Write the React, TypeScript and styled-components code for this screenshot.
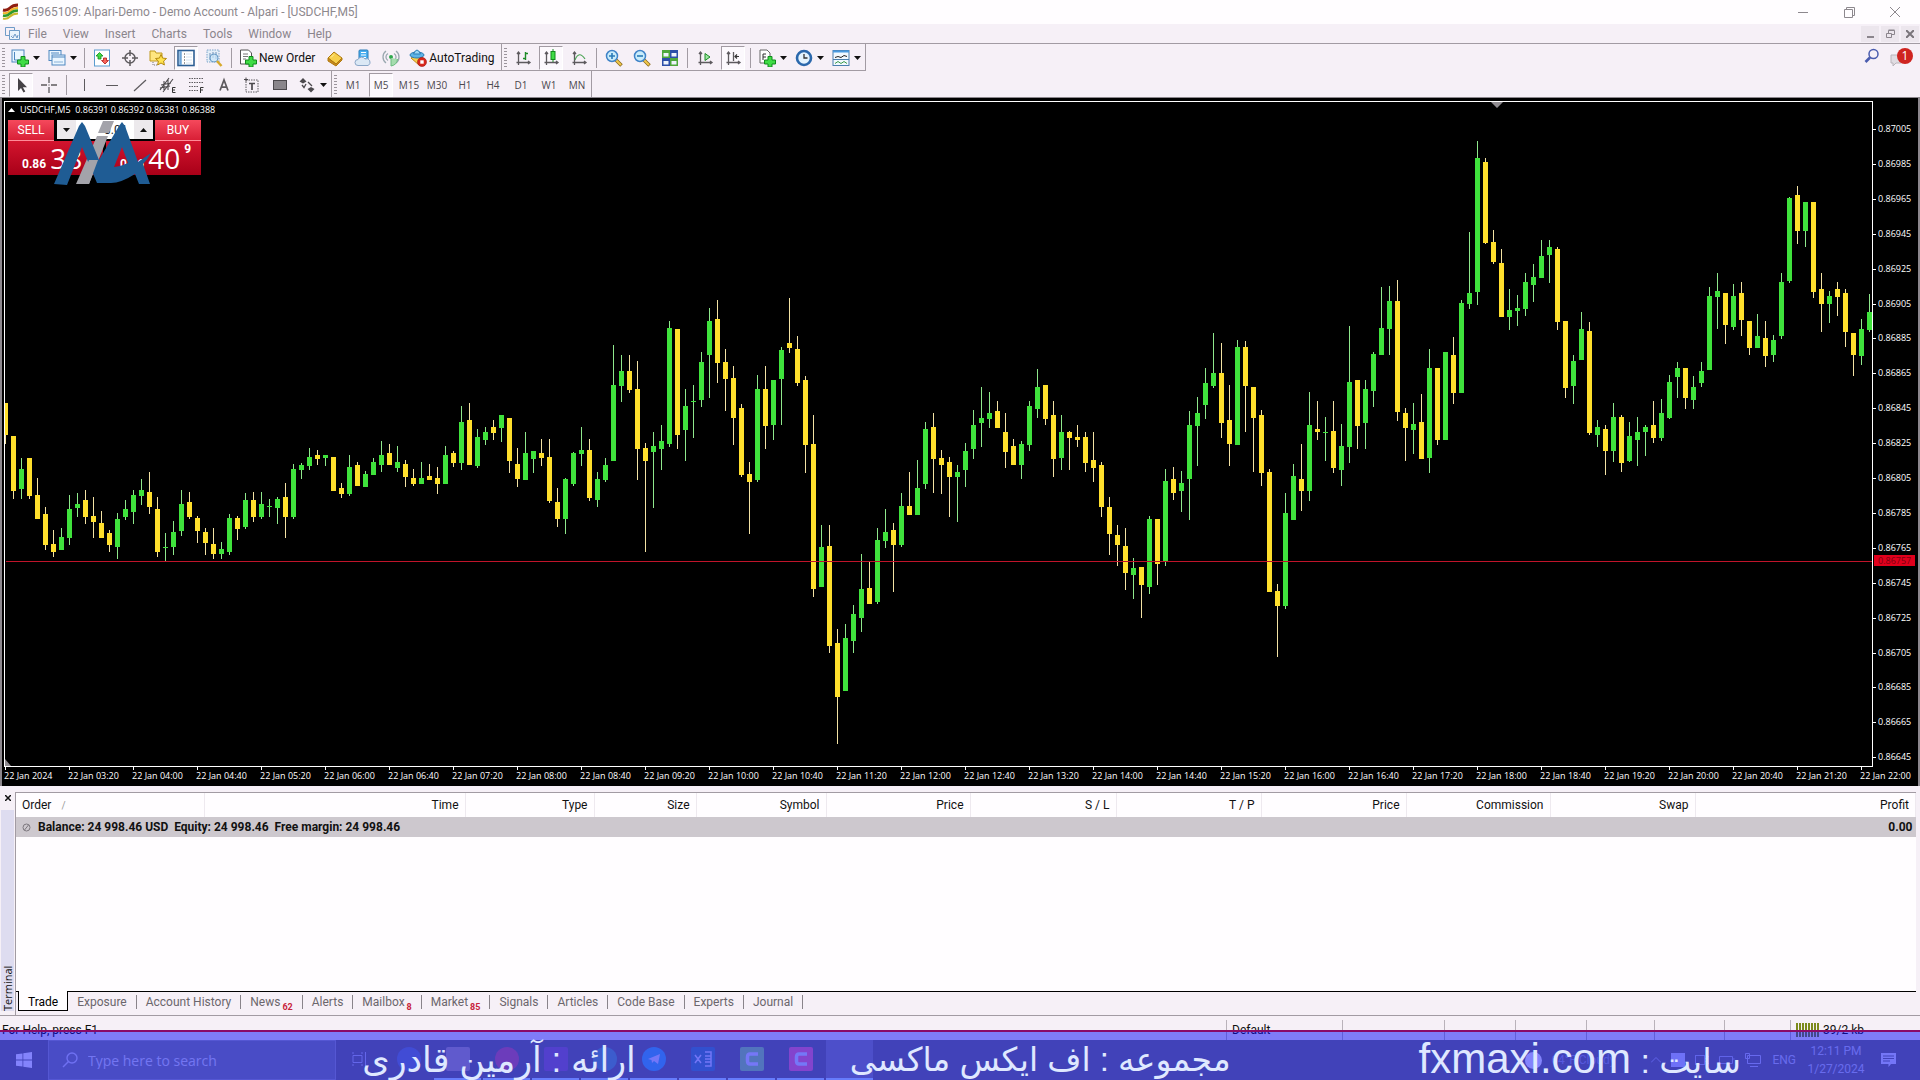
import React from 'react';
import styled, { createGlobalStyle, css } from 'styled-components';

const GlobalStyle = createGlobalStyle`
  *, *::before, *::after { box-sizing: border-box; }
  body { margin: 0; background: #f6f0f7; }
  button, input { font: inherit; color: inherit; }
`;

const uiFont = 'Roboto, "Open Sans", sans-serif';
const chartFont = '"Open Sans", "Noto Sans", sans-serif';
const chrome = '#f6f0f7';
const edge = '#a29ba3';

const Screen = styled.div`
  position: relative;
  display: flex;
  flex-direction: column;
  min-height: 100vh;
  overflow: hidden;
  background: ${chrome};
  font-family: ${uiFont};
  font-size: 12px;
  line-height: 16px;
  color: #111;
`;

/* ---------- window chrome ---------- */

const TitleBar = styled.header`
  display: flex;
  align-items: center;
  height: 24px;
  padding: 0 2px;
  gap: 5px;
  background: #fffdff;
  color: #8d888e;
`;

const TitleText = styled.h1`
  flex: 1;
  margin: 0;
  font-size: 12px;
  font-weight: 400;
`;

const WindowButtons = styled.div`
  display: flex;
`;

const WindowButton = styled.button<{ $shade?: boolean }>`
  display: flex;
  align-items: center;
  justify-content: center;
  width: ${(p) => (p.$shade ? 18 : 46)}px;
  height: ${(p) => (p.$shade ? 16 : 22)}px;
  padding: 0;
  border: 0;
  background: ${(p) => (p.$shade ? '#ece6ed' : 'transparent')};
`;

const MenuBar = styled.nav`
  display: flex;
  align-items: center;
  height: 19px;
  padding-left: 5px;
  color: #8b858c;
`;

const MenuItem = styled.button`
  padding: 0 8px;
  border: 0;
  background: none;
  line-height: 18px;
`;

const Spacer = styled.span`
  flex: 1;
`;

const MdiButtons = styled.div`
  display: flex;
  gap: 2px;
  padding-right: 1px;
`;

/* ---------- toolbars ---------- */

const ToolRow = styled.div<{ $last?: boolean }>`
  display: flex;
  height: ${(p) => (p.$last ? 26 : 28)}px;
  ${(p) => !p.$last && css`border-top: 1px solid ${edge};`}
`;

const ToolGroup = styled.div<{ $line?: boolean }>`
  display: flex;
  align-items: center;
  padding-top: 1px;
  border-right: 1px solid ${edge};
  ${(p) => p.$line && css`border-bottom: 1px solid ${edge};`}
`;

const Grip = styled.i`
  width: 3px;
  height: 20px;
  margin: 0 2px;
  background: repeating-linear-gradient(#9b949c 0 1px, transparent 1px 3px);
`;

const Divider = styled.i`
  width: 1px;
  height: 20px;
  margin: 0 3px;
  background: ${edge};
`;

const ToolButton = styled.button<{ $on?: boolean; $wide?: boolean }>`
  display: flex;
  align-items: center;
  justify-content: center;
  gap: 2px;
  width: ${(p) => (p.$wide ? 'auto' : '28px')};
  height: 24px;
  padding: ${(p) => (p.$wide ? '0 5px 0 3px' : 0)};
  border: 1px solid transparent;
  background: none;
  white-space: nowrap;
  ${(p) => p.$on && css`
    width: 24px;
    margin: 0 2px;
    border-color: ${edge} #fff #fff ${edge};
    background: #fcf9fd;
  `}
`;

const MenuToolButton = styled(ToolButton)`
  justify-content: flex-start;
  gap: 4px;
  width: 37px;
  padding-left: 3px;
`;

const PeriodButton = styled(ToolButton)`
  font-family: ${chartFont};
  font-size: 10px;
  color: #4c484d;
`;

const RightTools = styled.div`
  display: flex;
  align-items: flex-start;
  padding: 3px 6px 0 0;
  gap: 10px;
`;

const PlainButton = styled.button`
  padding: 0;
  border: 0;
  background: none;
  line-height: 0;
`;

/* ---------- chart ---------- */

const ChartFrame = styled.main`
  position: relative;
  border: solid #8c878d;
  border-width: 1px 2px 0 2px;
  background: #000;
`;

const ChartSvg = styled.svg`
  display: block;
  width: 100%;
  height: auto;
  font-family: ${chartFont};
`;

const ChartCaption = styled.div`
  position: absolute;
  top: 4px;
  left: 6px;
  display: flex;
  align-items: center;
  gap: 5px;
  color: #fff;
  font-family: ${chartFont};
  font-size: 9px;
  white-space: pre;
`;

const TradePanel = styled.section`
  position: absolute;
  top: 22px;
  left: 6px;
  display: grid;
  grid-template-columns: 1fr 1fr;
  grid-template-rows: 21px 34px;
  column-gap: 3px;
  width: 193px;
  color: #fff;
`;

const TradeTop = styled.div`
  grid-column: 1 / 3;
  display: flex;
  justify-content: space-between;
`;

const SideButton = styled.button`
  width: 46px;
  padding: 0;
  border: 0;
  border-bottom: 1px solid #ff8b98;
  background: linear-gradient(#f5495c, #d81f36);
  line-height: 20px;
`;

const LotBox = styled.div`
  display: flex;
  width: 96px;
  height: 19px;
  background: #fff;
  color: #222;
`;

const LotInput = styled.input`
  width: 58px;
  padding: 0 6px;
  border: 0;
  background: #fff;
  text-align: right;
`;

const LotStep = styled.button`
  width: 19px;
  padding: 0;
  border: 0;
  background: #ece9ec;
  line-height: 0;
`;

const Quote = styled.button`
  display: flex;
  align-items: flex-end;
  gap: 4px;
  padding: 0 0 3px 14px;
  border: 0;
  background: linear-gradient(#d3142e, #a80018);
  font-weight: 700;
  line-height: 16px;
  text-align: left;
`;

const BigFigure = styled.span`
  font-family: ${chartFont};
  font-size: 28px;
  font-weight: 400;
  line-height: 28px;
`;

const Pip = styled.sup`
  align-self: flex-start;
  font-size: 12px;
  line-height: 16px;
`;

const Watermark = styled.svg`
  position: absolute;
  top: 22px;
  left: 52px;
`;

/* ---------- terminal ---------- */

const Terminal = styled.section`
  display: flex;
  flex: 1;
  margin-top: 6px;
  min-height: 224px;
  border-bottom: 1px solid ${edge};
`;

const TerminalRail = styled.div`
  display: flex;
  flex-direction: column;
  align-items: center;
  justify-content: space-between;
  width: 15px;
  padding-bottom: 4px;
`;

const RailClose = styled.button`
  width: 13px;
  height: 12px;
  padding: 0;
  border: 0;
  background: none;
  line-height: 0;
`;

const RailLabel = styled.span`
  flex: 1;
  width: 13px;
  margin-top: 6px;
  background: #dedcf0;
  font-family: ${chartFont};
  font-size: 11px;
  line-height: 13px;
  writing-mode: vertical-rl;
  transform: rotate(180deg);
`;

const TerminalBody = styled.div`
  display: flex;
  flex: 1;
  flex-direction: column;
  margin-right: 4px;
  border: solid ${edge};
  border-width: 1px 0 0 1px;
  background: #fffdff;
`;

const TradeTable = styled.table`
  width: 100%;
  border-collapse: collapse;
  table-layout: fixed;
`;

const HeadCell = styled.th<{ $left?: boolean }>`
  height: 24px;
  padding: 0 6px;
  border-right: 1px solid #eee9ef;
  font-weight: 400;
  text-align: ${(p) => (p.$left ? 'left' : 'right')};
`;

const BalanceCell = styled.td<{ $right?: boolean }>`
  height: 20px;
  padding: 0 3px 0 6px;
  background: #cdc8ce;
  font-weight: 700;
  text-align: ${(p) => (p.$right ? 'right' : 'left')};
  white-space: pre;

  svg { margin-right: 7px; vertical-align: -2px; }
`;

const SortMark = styled.span`
  margin-left: 10px;
  color: #999;
  font-size: 10px;
`;

const TabBar = styled.div`
  display: flex;
  align-items: flex-start;
  height: 24px;
  margin-top: auto;
  padding-left: 2px;
  border-top: 1px solid #000;
  background: ${chrome};
`;

const Tab = styled.button<{ $active?: boolean }>`
  height: 14px;
  margin-top: 3px;
  padding: 0 9px;
  border: 0;
  border-right: 1px solid #89838a;
  background: none;
  color: #6b666c;
  line-height: 14px;
  white-space: nowrap;
  ${(p) => p.$active && css`
    height: 20px;
    margin-top: -1px;
    padding-top: 2px;
    border: solid #000;
    border-width: 0 1px 1px;
    background: #fffdff;
    color: #000;
  `}
`;

const TabCount = styled.sub`
  margin-left: 2px;
  color: #c8233c;
  font-size: 9px;
  line-height: 9px;
  font-weight: 700;
  vertical-align: -4px;
`;

const StatusBar = styled.footer`
  display: flex;
  height: 24px;
  padding-top: 4px;
  padding-left: 2px;
`;

const StatusHelp = styled.span`
  flex: 1;
  line-height: 20px;
`;

const StatusCell = styled.span<{ $w: number }>`
  display: flex;
  align-items: center;
  gap: 3px;
  width: ${(p) => p.$w}px;
  padding-left: 5px;
  border-left: 1px solid #b9b2ba;
  line-height: 20px;
`;

/* ---------- desktop task bar ---------- */

const TaskBar = styled.footer`
  display: flex;
  align-items: stretch;
  height: 40px;
  background: #7a7d78;
  color: #c8cee2;
`;

const StartButton = styled.button`
  width: 48px;
  padding: 0;
  border: 0;
  background: none;
  line-height: 0;
`;

const SearchField = styled.label`
  display: flex;
  align-items: center;
  gap: 9px;
  width: 288px;
  padding-left: 12px;
  border: 1px solid #a3a6ac;
  background: #8b9092;
`;

const SearchInput = styled.input`
  flex: 1;
  min-width: 0;
  padding: 2px 0 0;
  border: 0;
  background: none;
  font-family: ${chartFont};
  font-size: 14px;
  &::placeholder { color: #dfe3ea; opacity: 1; }
`;

const TaskButton = styled.button<{ $running?: boolean; $active?: boolean }>`
  display: flex;
  align-items: center;
  justify-content: center;
  width: 47px;
  margin-right: 2px;
  padding: 0;
  border: 0;
  border-bottom: 2px solid ${(p) => (p.$running ? '#c4f0ff' : 'transparent')};
  background: ${(p) => (p.$active ? '#92969a' : 'none')};
`;

const AppTile = styled.span<{ $bg: string; $round?: boolean }>`
  display: flex;
  align-items: center;
  justify-content: center;
  width: 24px;
  height: 24px;
  border-radius: ${(p) => (p.$round ? 12 : 2)}px;
  background: ${(p) => p.$bg};
  color: #d5d9ea;
`;

const Tray = styled.div`
  display: flex;
  align-items: center;
  gap: 10px;
  margin-left: auto;
  padding-right: 23px;
`;

const Weather = styled.span`
  display: flex;
  align-items: center;
  gap: 9px;
  margin-right: 26px;
  color: #a6abc4;
`;

const WeatherDot = styled.i`
  width: 17px;
  height: 17px;
  border-radius: 50%;
  background: #fff;
`;

const Clock = styled.time`
  width: 60px;
  margin-right: 4px;
  line-height: 18px;
  text-align: center;
`;

/* ---------- broadcast banner ---------- */

const Banner = styled.aside`
  position: absolute;
  right: 0;
  bottom: 0;
  left: 0;
  display: flex;
  justify-content: flex-end;
  align-items: center;
  height: 50px;
  padding: 8px 179px 0 0;
  border-top: 2px solid #8a0a68;
  background: rgba(8, 8, 250, 0.5);
  color: #dfe8ff;
  font-family: "Liberation Sans", "DejaVu Sans", sans-serif;
  line-height: 40px;
  white-space: nowrap;
  pointer-events: none;
`;

const BannerText = styled.span<{ $size: number; $gap: number }>`
  margin-right: ${(p) => p.$gap}px;
  font-size: ${(p) => p.$size}px;
`;

const Latin = styled.bdi`
  font-size: 42px;
`;

/* ---------- data ---------- */

// One bar per entry: colour, high, body top, body bottom, low.
const BARS = `
Y403,403,435,444 Y436,436,491,499 G458,469,489,499 Y458,458,496,499 Y478,495,519,519 Y507,514,545,550
Y530,544,552,557 G528,537,550,550 G495,509,538,545 G493,504,508,517 Y490,500,517,524 Y497,516,522,538
Y511,523,538,538 Y530,533,545,552 G513,519,547,559 G500,509,517,520 G490,495,512,524 G479,490,496,505
Y472,492,507,514 Y497,509,552,557 G533,547,548,561 G521,532,547,555 G490,504,531,536 Y492,502,517,519
Y516,518,531,543 Y528,532,543,555 Y528,544,554,559 G542,549,554,559 G514,518,552,555 Y516,518,529,540
G493,500,527,529 Y492,500,517,522 G492,504,517,519 G499,506,507,517 G497,499,508,524 Y483,497,517,538
G464,469,517,519 G463,465,470,479 G448,457,466,470 Y450,455,459,465 G455,455,458,466 Y457,457,491,491
Y483,488,494,498 G455,467,494,496 Y462,465,486,486 G471,474,487,487 G458,462,475,475 G441,455,465,472
Y444,453,465,465 G446,462,468,472 Y460,464,477,487 Y469,478,484,486 G462,478,484,484 Y464,476,480,480
Y467,478,484,494 G446,455,484,484 Y451,453,463,467 G406,422,463,470 Y403,420,465,465 G429,437,466,468
G427,432,440,445 Y420,427,433,440 G415,415,428,442 Y418,418,461,473 Y448,464,479,487 G432,453,480,480
G451,451,459,473 Y439,453,458,466 Y439,457,501,503 Y488,502,519,527 G478,479,519,534 G452,453,484,486
G427,450,454,466 Y439,450,498,501 G472,479,500,507 G458,465,480,482 G345,385,461,461 G355,371,386,402
Y355,371,390,393 Y361,389,449,480 Y443,448,461,552 G432,446,452,508 G425,441,449,470 G321,328,444,447
Y329,329,435,449 G389,406,430,461 G385,401,402,438 G352,362,400,407 G308,321,355,398 Y300,319,363,383
Y349,362,379,411 Y366,378,418,445 Y404,408,475,477 Y462,474,482,534 G375,389,480,482 Y366,389,426,449
G380,380,425,440 G347,350,379,425 Y298,343,348,353 Y336,349,383,386 Y376,380,445,473 Y415,444,589,597
G525,547,587,587 Y525,546,646,653 Y629,643,697,744 G624,638,691,691 G605,614,641,653 G554,589,618,632
Y562,588,604,604 G528,540,602,604 G509,532,541,548 Y523,530,545,592 G493,506,545,547 Y472,506,515,515
G460,488,515,515 G422,429,484,489 Y413,427,459,493 Y450,458,465,494 Y457,462,477,517 G465,472,477,522
G443,451,470,487 G410,425,449,459 G387,418,423,447 G392,413,419,428 Y401,411,428,428 Y413,432,452,468
Y439,446,465,465 G441,444,465,479 G401,406,445,451 G369,387,409,418 Y385,385,419,425 Y401,415,459,477
G415,432,458,470 Y431,432,438,470 Y425,437,440,447 Y432,437,463,472 Y432,460,468,482 Y462,465,507,517
Y497,507,534,555 Y525,535,545,566 Y528,546,573,590 G558,568,575,599 Y567,567,585,618 G516,519,587,594
Y519,519,564,585 G469,481,561,566 Y467,479,493,500 G471,483,491,512 G411,425,479,520 G397,413,426,466
G368,383,405,419 G333,373,386,388 Y343,373,423,438 Y385,420,444,466 G340,347,445,445 Y341,347,386,432
Y387,387,418,472 Y410,415,473,486 Y469,472,592,592 Y584,591,606,657 G493,513,606,609 G464,476,520,520
Y444,479,491,511 G392,425,491,501 Y401,429,432,440 G417,432,433,461 Y401,431,468,473 G424,446,470,486
G326,382,447,463 Y380,380,426,449 G380,389,423,449 G352,354,391,407 G287,328,355,355 G286,301,329,355
Y280,301,412,421 Y408,413,428,461 G403,424,430,454 Y394,422,459,459 G349,368,458,473 Y368,368,440,445
G352,352,440,440 Y337,355,393,404 G300,303,393,393 G232,293,304,309 G141,158,292,305 Y158,162,243,244
Y230,242,262,264 Y249,263,317,317 G289,310,317,330 G295,308,311,326 G273,282,309,316 G264,277,285,302
G240,256,278,278 G240,247,255,283 Y247,249,322,330 Y321,321,388,398 G355,361,386,404 G312,329,360,360
Y322,331,433,435 G420,427,435,447 Y425,429,451,475 G403,417,451,462 Y415,417,463,472 G422,436,461,462
G417,432,440,466 G425,427,432,456 Y401,425,438,443 G399,413,438,441 G375,382,418,419 G362,368,377,398
Y368,368,398,409 G376,387,400,409 G362,371,383,387 G287,296,370,370 G273,291,297,329 Y293,293,325,344
G284,296,327,330 Y282,293,320,336 Y321,321,348,355 G314,336,348,348 Y321,338,356,367 G335,340,355,362
G273,282,336,339 G197,198,281,283 Y186,195,231,244 G202,202,231,247 Y202,202,292,298 Y273,289,304,332
G291,296,304,323 Y282,289,297,316 Y289,293,332,347 Y333,333,355,376 G319,329,356,365 G294,312,330,332
`.trim().split(/\s+/).map((b) => {
  const [high, top, bottom, low] = b.slice(1).split(',').map(Number);
  return { up: b[0] === 'G', high, top, bottom, low };
});

const PRICES = Array.from({ length: 19 }, (_, i) => ({
  label: ((87005 - i * 20) / 100000).toFixed(5),
  y: Math.round(129 + i * 34.9),
}));

const TIMES = Array.from({ length: 30 }, (_, i) => {
  const t = 160 + i * 40;
  const hh = String(Math.floor(t / 60)).padStart(2, '0');
  const mm = String(t % 60).padStart(2, '0');
  return { label: i === 0 ? '22 Jan 2024' : `22 Jan ${hh}:${mm}`, x: 5 + i * 64 };
});

const COLUMNS: [string, number | undefined][] = [
  ['Order', 188], ['Time', 261], ['Type', 129], ['Size', 102], ['Symbol', 130], ['Price', 144],
  ['S / L', 146], ['T / P', 145], ['Price', 145], ['Commission', 144], ['Swap', 145], ['Profit', undefined],
];

const TABS: [string, string?][] = [
  ['Trade'], ['Exposure'], ['Account History'], ['News', '62'], ['Alerts'], ['Mailbox', '8'], ['Market', '85'],
  ['Signals'], ['Articles'], ['Code Base'], ['Experts'], ['Journal'],
];

/* ---------- icons ---------- */

const Icon = ({ children, s = 18 }: { children: React.ReactNode; s?: number }) => (
  <svg width={s} height={s} viewBox="0 0 18 18" fill="none" aria-hidden="true">{children}</svg>
);
const Caret = () => (
  <svg width="7" height="4" viewBox="0 0 7 4" aria-hidden="true"><path d="M0 0h7L3.500 4z" fill="#111" /></svg>
);
const Plus = () => <path d="M10 7.500h4v3.500h3.500v4H14V18h-4v-3H6.500v-4H10z" fill="#3fdc45" stroke="#118a1c" />;
const Axes = () => <path d="M4.500 3v13M2.500 13.500H16M3 5l1.500-2L6 5M14 12l2 1.500-2 1.500" stroke="#5d5a5e" strokeWidth="1.300" />;
const Lens = ({ minus }: { minus?: boolean }) => (
  <Icon>
    <path d="M11 11l5.500 5.500" stroke="#8a6a1c" strokeWidth="3.600" />
    <path d="M11 11l5 5" stroke="#f1c84c" strokeWidth="2" />
    <circle cx="7" cy="7" r="5.500" fill="#c9ecfb" stroke="#3f83c8" strokeWidth="1.500" />
    <path d={minus ? 'M4 7h6' : 'M4 7h6M7 4v6'} stroke="#2a7bb8" strokeWidth="1.600" />
  </Icon>
);

const I: Record<string, React.ReactNode> = {
  newChart: <Icon><rect x="1" y="1" width="12" height="12" fill="#eaf6ff" stroke="#4e87c0" /><path d="M3.500 3v8h8" stroke="#4e87c0" /><Plus /></Icon>,
  profiles: <Icon><rect x="1" y="1.500" width="12" height="10" fill="#eaf6ff" stroke="#4e87c0" /><rect x="4" y="6" width="13" height="10" fill="#eaf6ff" stroke="#4e87c0" /><path d="M4 8h13M3 4h8" stroke="#4e87c0" /><path d="M6 13h9" stroke="#8ab2d8" /></Icon>,
  market: <Icon><rect x="1.500" y="1" width="15" height="16" fill="#fff" stroke="#5b9ccf" /><path d="M6.500 3.500L3 7h2v3h3V7h2z" fill="#3fdc45" stroke="#118a1c" strokeWidth=".8" /><path d="M12 15l3.500-3.500h-2V9h-3v2.500h-2z" fill="#f8665c" stroke="#b01818" strokeWidth=".8" /></Icon>,
  cross: <Icon><circle cx="9" cy="9" r="5" stroke="#5d5a5e" strokeWidth="1.400" /><path d="M9 1v6M9 11v6M1 9h6M11 9h6" stroke="#5d5a5e" strokeWidth="1.500" /></Icon>,
  favs: <Icon><path d="M1 2h5l1 2h6v8H1z" fill="#ffe680" stroke="#c09a1c" /><path d="M4 13v3h5" stroke="#777" strokeDasharray="1 1" /><path d="M12 5.500l1.600 3.600 3.900.4-2.900 2.600.8 3.900-3.400-2-3.400 2 .8-3.900-2.900-2.600 3.900-.4z" fill="#ffe350" stroke="#b58a10" /></Icon>,
  navigator: <Icon><rect x="1" y="1.500" width="16" height="15" fill="#fff" stroke="#2d5f94" strokeWidth="1.600" /><path d="M3.500 2v14" stroke="#6fa6d8" strokeWidth="2.500" /><path d="M7 5h1M7 8h1M7 11h1M7 14h1" stroke="#333" /><path d="M9 5h6M9 8h6M9 11h6M9 14h6" stroke="#d4e4f2" /></Icon>,
  tester: <Icon><path d="M2 1h12v12H2z" fill="#e4eef8" stroke="#7aa3c8" strokeDasharray="1.500 1" /><path d="M5 11V4M8 9V3M11 10V3" stroke="#6a8fb8" /><circle cx="9" cy="9" r="4" fill="#c9e6fa" fillOpacity=".7" stroke="#6b9dc8" /><path d="M12 12l4.500 5" stroke="#d7a92c" strokeWidth="2.500" /></Icon>,
  order: <Icon><path d="M1.500 1h8l3 3v11h-11z" fill="#fff" stroke="#555" /><path d="M4 5h5M4 7.500h5M4 10h3" stroke="#777" /><Plus /></Icon>,
  gold: <Icon><path d="M2 9l6-6 8 6-6 6z" fill="#f7cf4c" stroke="#b07a10" /><path d="M2 9v3l8 5 6-6V9l-6 6z" fill="#c98a1c" stroke="#b07a10" /><path d="M5 8.500L8 5.500" stroke="#ffefa8" /></Icon>,
  cloud: <Icon><rect x="5" y="1" width="9" height="10" rx="1" fill="#4aaef0" stroke="#2b7db8" /><path d="M7 3.500h5M7 6h5M7 8.500h5" stroke="#fff" /><path d="M4 16.500a3 3 0 010-6 4 4 0 017-.5 3.300 3.300 0 013 6.500z" fill="#dbe8f5" stroke="#8ba7c8" /></Icon>,
  signal: <Icon><circle cx="9" cy="8" r="2" fill="#2fa84c" /><path d="M6 11.500a4 4 0 010-7M12 11.500a4 4 0 000-7M4 14a7.500 7.500 0 010-12M14 14a7.500 7.500 0 000-12" stroke="#9aa8b0" strokeWidth="1.300" /><path d="M9 9v8q6-1 6.500-7" fill="#a5dcae" stroke="#6cbc80" /></Icon>,
  auto: <Icon><path d="M2 9l5-3 7 3-4 7z" fill="#f7cf4c" stroke="#c08a18" /><ellipse cx="8" cy="6" rx="7" ry="3" fill="#5eb4e6" stroke="#2c7cb4" /><path d="M4.500 5q3.500-8 7 0z" fill="#9bd6f5" stroke="#2c7cb4" /><circle cx="13" cy="13" r="4.500" fill="#d8281c" stroke="#a01810" strokeWidth=".6" /><rect x="11.300" y="11.300" width="3.400" height="3.400" fill="#fff" /></Icon>,
  bars: <Icon><Axes /><path d="M11.500 3v8M9 9.500h2.500M11.500 4.500H14" stroke="#1c8a26" strokeWidth="1.400" /></Icon>,
  candles: <Icon><Axes /><path d="M11 0v13" stroke="#1c8a26" /><rect x="9" y="2.500" width="4" height="8" fill="#3fdc45" stroke="#118a1c" /></Icon>,
  line: <Icon><Axes /><path d="M5 11q4-10 10-1" stroke="#4ba455" strokeWidth="1.200" /></Icon>,
  zoomIn: <Lens />,
  zoomOut: <Lens minus />,
  tile: <Icon><rect x="1" y="1" width="8" height="8" fill="#4fa83c" /><rect x="9" y="1" width="8" height="8" fill="#2d4fa8" /><rect x="1" y="9" width="8" height="8" fill="#2d4fa8" /><rect x="9" y="9" width="8" height="8" fill="#4fa83c" /><path d="M2.500 4h5v3.500h-5zM10.500 4h5v3.500h-5zM2.500 12h5v3.500h-5zM10.500 12h5v3.500h-5z" fill="#eef4fb" /></Icon>,
  scroll: <Icon><Axes /><path d="M9 4.500l5 3.500-5 3.500z" fill="#9be8a0" stroke="#1c8a26" /></Icon>,
  shift: <Icon><Axes /><path d="M9.500 3v9" stroke="#5d5a5e" strokeWidth="1.300" /><path d="M15 7.500h-4M13 5.500l-2 2 2 2" stroke="#333" strokeWidth="1.200" /></Icon>,
  indicators: <Icon><path d="M2 1h7l3 3v10H2z" fill="#fff" stroke="#666" /><path d="M5 11V5h3M5 8h3" stroke="#333" /><Plus /></Icon>,
  clock: <Icon><circle cx="9" cy="9" r="7" fill="#e4f4ff" stroke="#2b68ac" strokeWidth="2.600" /><path d="M9 5v4h3.500" stroke="#333" strokeWidth="1.300" /></Icon>,
  template: <Icon><rect x="1" y="1.500" width="16" height="15" fill="#f2f9ff" stroke="#4a7fae" /><path d="M1 2.500h16" stroke="#4a9ae0" strokeWidth="2" /><path d="M3 8.500l3-1 3 1 3-2 3 1" stroke="#222" /><path d="M1 10.500h16" stroke="#4a7fae" /><path d="M3 14.500l3-2 3 2 3-2 3 2" stroke="#3a9a48" /></Icon>,
  cursor: <Icon><path d="M6 2v13l3-3 2.500 4.500 1.800-1-2.400-4.300H15z" fill="#454246" /></Icon>,
  plusLine: <Icon><path d="M9 1v6M9 11v6M1 9h6M11 9h6M9 8.500v1" stroke="#5d5a5e" strokeWidth="1.300" /></Icon>,
  vline: <Icon><path d="M9.500 3v12" stroke="#5d5a5e" /></Icon>,
  hline: <Icon><path d="M3 9.500h12" stroke="#5d5a5e" /></Icon>,
  trend: <Icon><path d="M3 15L15 4" stroke="#5d5a5e" strokeWidth="1.200" /></Icon>,
  channel: <Icon><path d="M1 14L10 2M4 16L14 3M2 9l10-2M1 12l10-2M5 5v9M9 3v11" stroke="#4c494d" strokeWidth="1.100" /><path d="M16.500 11.500h-3v5h3M13.500 14h2.500" stroke="#333" /></Icon>,
  fib: <Icon><path d="M2 2.500h14M2 6.500h14M2 10.500h9M2 14.500h9" stroke="#5d5a5e" strokeDasharray="1.500 1" /><path d="M16.500 11.500h-3V17M13.500 14h2.500" stroke="#333" /></Icon>,
  text: <Icon><path d="M5 14.500L9 4l4 10.500M6.500 11.200h5" stroke="#5d5a5e" strokeWidth="1.700" /></Icon>,
  label: <Icon><rect x="3" y="4" width="12" height="12" stroke="#5d5a5e" strokeDasharray="1.500 1" /><path d="M6 7.500h6M9 7.500V14" stroke="#4c494d" strokeWidth="1.700" /><path d="M3 1.500v4M1 3.500h4" stroke="#4c494d" /></Icon>,
  rect: <Icon><rect x="2.500" y="4.500" width="13" height="9" fill="#8a868b" stroke="#4c494d" /></Icon>,
  arrows: <Icon><path d="M5 2l3.500 3.500-3.500 2L1.500 5.500zM13 16.500L9.500 13l3.500-2 3.500 2z" fill="#4c494d" /><path d="M4 9l2 2.500L8 8M10 6l4 4" stroke="#4c494d" strokeWidth="1.300" /></Icon>,
};

const Tool = ({ n, on }: { n: string; on?: boolean }) => (
  <ToolButton $on={on} aria-label={n} aria-pressed={on}>{I[n]}</ToolButton>
);
const MenuTool = ({ n }: { n: string }) => (
  <MenuToolButton aria-label={n}>{I[n]}<Caret /></MenuToolButton>
);

const Minimize = () => <svg width="10" height="10" stroke="currentColor"><path d="M0 5.500h10" /></svg>;
const Restore = () => <svg width="11" height="11" fill="none" stroke="currentColor"><path d="M.5 2.500h8v8h-8zM2.500 2.500v-2h8v8h-2" /></svg>;
const Close = () => <svg width="10" height="10" viewBox="0 0 10 10" stroke="currentColor"><path d="M0 0l10 10M10 0L0 10" /></svg>;
const BracketMark = () => <svg width="14" height="16" fill="none" stroke="#e2e6f4" strokeWidth="3.500"><path d="M13 3H5Q2.500 3 2.500 6v4q0 3 2.500 3h8" /></svg>;

/* ---------- sections ---------- */

const Chart = () => (
  <ChartFrame>
    <ChartSvg viewBox="2 98 1916 688" role="img" aria-label="USDCHF five minute candlestick chart">
      <g shapeRendering="crispEdges">
        {BARS.map((b, i) => {
          const x = 5 + i * 8;
          const left = Math.max(x - 2, 5);
          const right = Math.min(x + 3, 1872);
          return (
            <g key={i}>
              <rect x={x} y={b.high} width="1" height={b.low - b.high} fill={b.up ? '#8fe88c' : '#f3e2a4'} />
              <rect x={left} y={b.top} width={right - left} height={b.bottom - b.top} fill={b.up ? '#3fe23c' : '#ffdf2c'} />
            </g>
          );
        })}
        <rect x="6" y="561" width="1866" height="1" fill="#c0142a" />
        <path d="M4 101h1869v1H4zM4 101h1v666H4zM1872 101h1v666h-1zM4 766h1869v1H4z" fill="#fff" />
        {PRICES.map((p) => <rect key={p.label} x="1873" y={p.y} width="3" height="1" fill="#fff" />)}
        {TIMES.map((t) => <rect key={t.label} x={t.x} y="767" width="1" height="3" fill="#fff" />)}
        <rect x="1874" y="555" width="41" height="11" fill="#e0001c" />
      </g>
      <path d="M1491 102h12l-6 6zM5 759l6 7H5z" fill="#8f8b90" />
      <g fill="#fff" fontSize="9">
        {PRICES.map((p) => <text key={p.label} x="1878" y={p.y + 3}>{p.label}</text>)}
        {TIMES.map((t) => <text key={t.label} x={t.x - 1} y="779">{t.label}</text>)}
      </g>
      <text x="1878" y="564" fontSize="9" fill="#7a0010">0.86757</text>
    </ChartSvg>
    <ChartCaption>
      <svg width="7" height="4" viewBox="0 0 7 4" aria-hidden="true"><path d="M0 4h7L3.500 0z" fill="#fff" /></svg>
      <span>USDCHF,M5  0.86391 0.86392 0.86381 0.86388</span>
    </ChartCaption>
    <TradePanel aria-label="One click trading">
      <TradeTop>
        <SideButton>SELL</SideButton>
        <LotBox>
          <LotStep aria-label="Decrease volume"><Caret /></LotStep>
          <LotInput aria-label="Volume" defaultValue="0.01" />
          <LotStep aria-label="Increase volume">
            <svg width="7" height="4" viewBox="0 0 7 4"><path d="M0 4h7L3.500 0z" fill="#111" /></svg>
          </LotStep>
        </LotBox>
        <SideButton>BUY</SideButton>
      </TradeTop>
      <Quote>0.86<BigFigure>38</BigFigure><Pip>8</Pip></Quote>
      <Quote>0.86<BigFigure>40</BigFigure><Pip>9</Pip></Quote>
    </TradePanel>
    <Watermark width="100" height="66" viewBox="54 120 100 66" aria-hidden="true">
      <path d="M103 121h11l-5 12H98zM97 136h11L89 184H76z" fill="#a3a3aa" />
      <path d="M54 184L79 126l3-4 3 4 14 34 20-34 3-4 3 4 13 36 13-9q-3 6-8 11l7 20h-11l-4-10q-14 9-24 9H97l-6-14-9-22-15 38zM122 147l-8 20q8-1 14-4z" fill="#1f5c94" fillRule="evenodd" />
      <path d="M89 160h9l-9 24H78z" fill="#a3a3aa" />
    </Watermark>
  </ChartFrame>
);

const TerminalPanel = () => (
  <Terminal aria-label="Terminal">
    <TerminalRail>
      <RailClose aria-label="Close terminal">
        <svg width="6" height="6" viewBox="0 0 6 6" stroke="#111" strokeWidth="1.500"><path d="M0 0l6 6M6 0L0 6" /></svg>
      </RailClose>
      <RailLabel>Terminal</RailLabel>
    </TerminalRail>
    <TerminalBody>
      <TradeTable>
        <colgroup>
          {COLUMNS.map(([name, w], i) => <col key={name + i} width={w} />)}
        </colgroup>
        <thead>
          <tr>
            {COLUMNS.map(([name], i) => (
              <HeadCell key={name + i} $left={i === 0}>{name}{i === 0 && <SortMark>/</SortMark>}</HeadCell>
            ))}
          </tr>
        </thead>
        <tbody>
          <tr>
            <BalanceCell colSpan={11}>
              <svg width="9" height="11" viewBox="0 0 9 11" fill="none" stroke="#7d787e"><circle cx="4.500" cy="5.500" r="3.500" /><path d="M2.500 8l4-5" /></svg>
              Balance: 24 998.46 USD  Equity: 24 998.46  Free margin: 24 998.46
            </BalanceCell>
            <BalanceCell $right>0.00</BalanceCell>
          </tr>
        </tbody>
      </TradeTable>
      <TabBar role="tablist">
        {TABS.map(([name, count], i) => (
          <Tab key={name} role="tab" aria-selected={i === 0} $active={i === 0}>
            {name}{count && <TabCount>{count}</TabCount>}
          </Tab>
        ))}
      </TabBar>
    </TerminalBody>
  </Terminal>
);

const Desktop = () => (
  <TaskBar>
    <StartButton aria-label="Start">
      <svg width="16" height="16" viewBox="0 0 16 16" fill="#fff"><path d="M0 2.300l6.500-.9v6.200H0zM7.300 1.300L16 0v7.600H7.300zM0 8.400h6.500v6.200L0 13.700zM7.300 8.400H16V16l-8.700-1.300z" /></svg>
    </StartButton>
    <SearchField>
      <svg width="18" height="18" viewBox="0 0 18 18" fill="none" stroke="#d5d9ea" strokeWidth="1.400"><circle cx="11" cy="7" r="5" /><path d="M7.500 10.500L2 16" /></svg>
      <SearchInput aria-label="Search" placeholder="Type here to search" />
    </SearchField>
    <TaskButton aria-label="Task view">
      <svg width="18" height="16" fill="none" stroke="#c0c5da"><path d="M2 4.500h9v7H2zM2 1v2M11 1v2M2 13v2M11 13v2M14.500 1v14" /></svg>
    </TaskButton>
    <TaskButton aria-label="Mail"><AppTile $bg="#7a90b0" $round /></TaskButton>
    <TaskButton aria-label="Files" $running><AppTile $bg="#b8aca0" /></TaskButton>
    <TaskButton aria-label="Firefox" $running><AppTile $bg="#d0707c" $round /></TaskButton>
    <TaskButton aria-label="Notes" $running><AppTile $bg="#9c78a0" /></TaskButton>
    <TaskButton aria-label="Store" $running><AppTile $bg="#70b0a0" $round /></TaskButton>
    <TaskButton aria-label="Telegram" $running>
      <AppTile $bg="#5ac0e0" $round>
        <svg width="14" height="12"><path d="M1 6l12-5-2 10-4-3-2 2-.5-3z" fill="#dfe6f6" /></svg>
      </AppTile>
    </TaskButton>
    <TaskButton aria-label="Excel" $running>
      <AppTile $bg="#5c98a4">
        <svg width="20" height="18" fill="none" stroke="#dde2f2" strokeWidth="1.500"><path d="M2 5l6 8M8 5l-6 8M12 2h6v14h-6M12 6h6M12 9h6M12 12h6" /></svg>
      </AppTile>
    </TaskButton>
    <TaskButton aria-label="Camtasia" $running><AppTile $bg="#9ce080"><BracketMark /></AppTile></TaskButton>
    <TaskButton aria-label="Camtasia recorder" $running><AppTile $bg="#ff80a0"><BracketMark /></AppTile></TaskButton>
    <TaskButton aria-label="MetaTrader" $running $active />
    <Tray>
      <Weather><WeatherDot />64°F Cloudy</Weather>
      <svg width="10" height="6" fill="none" stroke="#b9bed8"><path d="M0 5.500L5 .500l5 5" /></svg>
      <svg width="14" height="14"><rect width="14" height="14" fill="#d5daf5" /></svg>
      <svg width="14" height="14" fill="none" stroke="#b9bed8"><rect x=".5" y="2.500" width="9" height="9" /><path d="M10 6l4-3v8l-4-3" /></svg>
      <svg width="16" height="12" fill="none" stroke="#b9bed8"><path d="M.5 2.500h13v7H.5zM14 5h1.500" /></svg>
      <svg width="17" height="15" fill="none" stroke="#c6cbe2"><path d="M2.500 2.500h13v8h-13zM5 13.500h8M.5.500h4v5h-4z" /></svg>
      <span>ENG</span>
      <Clock>12:11 PM<br />1/27/2024</Clock>
      <svg width="17" height="17" viewBox="0 0 17 17"><path d="M1 1h15v11h-5l-2.500 3V12H1z" fill="#e0e4f4" /><path d="M3 4h11M3 6.500h11M3 9h7" stroke="#7a7d78" /></svg>
    </Tray>
  </TaskBar>
);

export default function App() {
  return (
    <Screen>
      <GlobalStyle />
      <TitleBar>
        <svg width="17" height="18" viewBox="0 0 17 18" fill="none" aria-hidden="true">
          <path d="M1 7q4 1 7-2t8-3" stroke="#8f1c10" strokeWidth="3" /><path d="M1 10q4 1 7-2t8-3" stroke="#f0b428" strokeWidth="2" />
          <path d="M1 12.500q4 1 7-2t8-3" stroke="#2f9a2c" strokeWidth="2.500" /><path d="M1 15.500q4 1 7-2t8-3" stroke="#c9b82c" strokeWidth="2" />
        </svg>
        <TitleText>15965109: Alpari-Demo - Demo Account - Alpari - [USDCHF,M5]</TitleText>
        <WindowButtons>
          <WindowButton aria-label="Minimize"><Minimize /></WindowButton>
          <WindowButton aria-label="Restore"><Restore /></WindowButton>
          <WindowButton aria-label="Close"><Close /></WindowButton>
        </WindowButtons>
      </TitleBar>
      <MenuBar>
        <svg width="15" height="15" viewBox="0 0 15 15" fill="none" stroke="#6f9cc8" aria-hidden="true">
          <path d="M.5 1.500h9v8h-9z" /><path d="M4.500 4.500h10v9h-10zM6 10l2 2 2-4 2 4 1-3" fill="#eaf4fc" />
        </svg>
        {['File', 'View', 'Insert', 'Charts', 'Tools', 'Window', 'Help'].map((m) => <MenuItem key={m}>{m}</MenuItem>)}
        <Spacer />
        <MdiButtons>
          <WindowButton $shade aria-label="Minimize chart"><svg width="7" height="9" stroke="#8b858c" strokeWidth="2"><path d="M0 8h7" /></svg></WindowButton>
          <WindowButton $shade aria-label="Restore chart"><svg width="9" height="9" fill="none" stroke="#8b858c"><path d="M.5 4.500h5v4h-5zM2.500 4V1.500h6v4H6M2.500 1h6" /></svg></WindowButton>
          <WindowButton $shade aria-label="Close chart"><svg width="8" height="8" stroke="#7a757b" strokeWidth="2"><path d="M0 0l8 8M8 0L0 8" /></svg></WindowButton>
        </MdiButtons>
      </MenuBar>
      <ToolRow>
        <ToolGroup $line>
          <Grip />
          <MenuTool n="newChart" /><MenuTool n="profiles" />
          <Divider />
          <Tool n="market" /><Tool n="cross" /><Tool n="favs" /><Tool n="navigator" on /><Tool n="tester" />
          <Divider />
          <ToolButton $wide>{I.order}New Order</ToolButton>
          <Tool n="gold" /><Tool n="cloud" /><Tool n="signal" />
          <ToolButton $wide>{I.auto}AutoTrading</ToolButton>
        </ToolGroup>
        <ToolGroup $line>
          <Grip />
          <Tool n="bars" /><Tool n="candles" on /><Tool n="line" />
          <Divider />
          <Tool n="zoomIn" /><Tool n="zoomOut" /><Tool n="tile" />
          <Divider />
          <Tool n="scroll" /><Tool n="shift" on />
          <Divider />
          <MenuTool n="indicators" /><MenuTool n="clock" /><MenuTool n="template" />
        </ToolGroup>
        <Spacer />
        <RightTools>
          <PlainButton aria-label="Search">
            <svg width="16" height="20" viewBox="0 0 16 20" fill="none" stroke="#4a5cae"><circle cx="9.500" cy="7" r="4.500" strokeWidth="1.500" /><path d="M6 10.500L1.500 15" strokeWidth="2.600" /></svg>
          </PlainButton>
          <PlainButton aria-label="Notifications">
            <svg width="24" height="20" viewBox="0 0 24 20">
              <path d="M1 8h10v8H6l-3 3v-3H1z" fill="#e0dce2" stroke="#b9b4ba" />
              <circle cx="15" cy="9" r="8" fill="#cf2420" />
              <text x="15" y="13" textAnchor="middle" fontSize="12" fill="#fff" fontFamily="Open Sans, sans-serif">1</text>
            </svg>
          </PlainButton>
        </RightTools>
      </ToolRow>
      <ToolRow $last>
        <ToolGroup>
          <Grip />
          <Tool n="cursor" on /><Tool n="plusLine" />
          <Divider />
          <Tool n="vline" /><Tool n="hline" /><Tool n="trend" /><Tool n="channel" /><Tool n="fib" />
          <Tool n="text" /><Tool n="label" /><Tool n="rect" /><MenuTool n="arrows" />
        </ToolGroup>
        <ToolGroup>
          <Grip />
          {['M1', 'M5', 'M15', 'M30', 'H1', 'H4', 'D1', 'W1', 'MN'].map((p) => (
            <PeriodButton key={p} $on={p === 'M5'} aria-pressed={p === 'M5'}>{p}</PeriodButton>
          ))}
        </ToolGroup>
      </ToolRow>
      <Chart />
      <TerminalPanel />
      <StatusBar>
        <StatusHelp>For Help, press F1</StatusHelp>
        <StatusCell $w={116}>Default</StatusCell>
        <StatusCell $w={102} /><StatusCell $w={71} /><StatusCell $w={71} /><StatusCell $w={68} /><StatusCell $w={70} /><StatusCell $w={66} />
        <StatusCell $w={130}>
          <svg width="24" height="14" shapeRendering="crispEdges"><path d="M1 0v14M4 0v14M7 0v14M10 0v14M13 0v14M16 0v14M19 0v14M22 0v14" stroke="#7c8a1c" strokeWidth="2" /></svg>
          39/2 kb
        </StatusCell>
      </StatusBar>
      <Desktop />
      <Banner>
        <BannerText dir="rtl" lang="fa" $size={35} $gap={214}>ارائه : آرمین قادری</BannerText>
        <BannerText dir="rtl" lang="fa" $size={33} $gap={188}>مجموعه : اف ایکس ماکسی</BannerText>
        <BannerText dir="rtl" lang="fa" $size={34} $gap={0}>سایت : <Latin>fxmaxi.com</Latin></BannerText>
      </Banner>
    </Screen>
  );
}
